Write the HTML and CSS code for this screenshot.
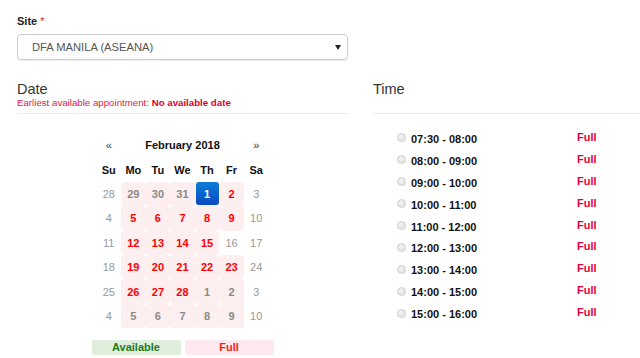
FILE: index.html
```html
<!DOCTYPE html>
<html lang="en">
<head>
    <meta charset="UTF-8">
    <title>Appointment - Site, Date and Time</title>
    <link rel="stylesheet" href="styles.css">
</head>
<body>
    <div class="page">
        <div class="field-label">Site <span class="req">*</span></div>
        <div class="select">
            <span>DFA MANILA (ASEANA)</span>
            <svg class="caret" width="6" height="5" viewBox="0 0 6 5"><path d="M0 0H6L3 5Z" fill="#222"/></svg>
        </div>

        <div class="columns">
            <div class="col col-date">
                <div class="col-head">
                    <h2>Date</h2>
                    <div class="earliest">Earliest available appointment: <b>No available date</b></div>
                </div>

                <table class="calendar">
                    <thead>
                        <tr class="nav">
                            <th>&laquo;</th>
                            <th colspan="5" class="month">February 2018</th>
                            <th>&raquo;</th>
                        </tr>
                        <tr class="dow">
                            <th>Su</th><th>Mo</th><th>Tu</th><th>We</th><th>Th</th><th>Fr</th><th>Sa</th>
                        </tr>
                    </thead>
                    <tbody id="days"></tbody>
                </table>

                <div class="legend">
                    <div class="legend-item available">Available</div>
                    <div class="legend-item full">Full</div>
                </div>
            </div>

            <div class="col col-time">
                <div class="col-head">
                    <h2>Time</h2>
                </div>
                <div class="slots" id="slots"></div>
            </div>
        </div>
    </div>

    <script>
        // kind: o = other month weekend, g = other month weekday (full), f = full, w = weekend, s = selected
        let weeks = [
            [[28,'o'],[29,'g'],[30,'g'],[31,'g'],[1,'s'],[2,'f'],[3,'o']],
            [[4,'w'],[5,'f'],[6,'f'],[7,'f'],[8,'f'],[9,'f'],[10,'w']],
            [[11,'w'],[12,'f'],[13,'f'],[14,'f'],[15,'f'],[16,'w'],[17,'w']],
            [[18,'w'],[19,'f'],[20,'f'],[21,'f'],[22,'f'],[23,'f'],[24,'w']],
            [[25,'w'],[26,'f'],[27,'f'],[28,'f'],[1,'g'],[2,'g'],[3,'o']],
            [[4,'o'],[5,'g'],[6,'g'],[7,'g'],[8,'g'],[9,'g'],[10,'o']]
        ];
        let classes = { o: 'day muted', g: 'day pink old', f: 'day pink full', w: 'day muted', s: 'day selected' };

        let days = document.getElementById('days');
        weeks.forEach(week => {
            let tr = document.createElement('tr');
            week.forEach(([num, kind]) => {
                let td = document.createElement('td');
                td.className = classes[kind];
                if (kind === 's') {
                    let btn = document.createElement('span');
                    btn.className = 'active';
                    btn.textContent = num;
                    td.appendChild(btn);
                } else {
                    td.textContent = num;
                }
                tr.appendChild(td);
            });
            days.appendChild(tr);
        });

        let times = ['07:30 - 08:00', '08:00 - 09:00', '09:00 - 10:00', '10:00 - 11:00', '11:00 - 12:00',
                     '12:00 - 13:00', '13:00 - 14:00', '14:00 - 15:00', '15:00 - 16:00'];
        let slots = document.getElementById('slots');
        times.forEach(t => {
            let row = document.createElement('div');
            row.className = 'slot';
            row.innerHTML = `<label><span class="radio"></span>${t}</label><span class="status">Full</span>`;
            slots.appendChild(row);
        });
    </script>
</body>
</html>
```

FILE: styles.css
```css
body {
    margin: 0;
    background: #fff;
    font-family: "Liberation Sans", Arial, sans-serif;
    color: #333;
    overflow: hidden;
}
.page {
    padding: 15px 0 0 17px;
}
.field-label {
    font-size: 11px;
    line-height: 12px;
    font-weight: bold;
    color: #222;
}
.req {
    color: #e0223c;
    font-weight: normal;
}
.select {
    margin-top: 7px;
    width: 331px;
    height: 26px;
    box-sizing: border-box;
    border: 1px solid #ccc;
    border-radius: 4px;
    box-shadow: 0 1px 1px rgba(0, 0, 0, 0.08);
    display: flex;
    align-items: center;
    justify-content: space-between;
    padding: 0 6px 0 14px;
    font-size: 11.2px;
    color: #555;
}
.caret {
    margin-top: 1px;
}
.columns {
    display: flex;
    gap: 25px;
    margin-top: 21px;
}
.col-date {
    width: 331px;
}
.col-time {
    flex: 1;
}
.col-head {
    height: 32px;
    border-bottom: 1px solid #eee;
}
.col-head h2 {
    margin: 0;
    font-size: 14.5px;
    line-height: 16px;
    font-weight: normal;
    color: #333;
}
.earliest {
    font-size: 9.7px;
    line-height: 12px;
    color: #e4164a;
}
.earliest b {
    color: #e0002e;
}
.calendar {
    margin: 19px auto 0;
    border-collapse: collapse;
    table-layout: fixed;
    width: 172px;
    font-size: 11px;
}
.calendar th,
.calendar td {
    height: 24.4px;
    padding: 0;
    text-align: center;
    vertical-align: middle;
}
.calendar th {
    font-weight: bold;
    color: #111;
}
.nav th:first-child,
.nav th:last-child {
    font-weight: normal;
    color: #333;
}
.day.muted {
    color: #999;
}
.day.pink {
    background: #fdeef0;
    border-radius: 4px;
    font-weight: bold;
}
.day.old {
    color: #8a8a8a;
}
.day.full {
    color: #ff0000;
}
.day.selected {
    background: #fdeef0;
}
.active {
    display: flex;
    align-items: center;
    justify-content: center;
    width: 23px;
    height: 23px;
    margin: 0 auto;
    border-radius: 3px;
    background: linear-gradient(#0c7fd6, #0848c2);
    color: #fff;
    font-weight: bold;
}
.legend {
    display: flex;
    justify-content: center;
    gap: 4px;
    margin-top: 12px;
}
.legend-item {
    width: 89px;
    height: 15px;
    line-height: 15px;
    text-align: center;
    font-size: 11px;
    font-weight: bold;
    border-radius: 2px;
}
.legend-item.available {
    background: #dfefdc;
    color: #1d7a1d;
}
.legend-item.full {
    background: #fde9ee;
    color: #ff1a1a;
}
.slots {
    margin-top: 14px;
    padding-left: 24px;
}
.slot {
    display: grid;
    grid-template-columns: 180px auto;
    align-items: center;
    height: 21.9px;
}
.slot label {
    display: flex;
    align-items: center;
    gap: 5px;
    font-size: 11px;
    font-weight: bold;
    color: #111;
}
.radio {
    width: 9px;
    height: 9px;
    box-sizing: border-box;
    border-radius: 50%;
    border: 1px solid #cfcfcf;
    background: radial-gradient(circle at 40% 35%, #f4f4f4, #dcdcdc);
    margin-bottom: 2px;
}
.status {
    font-size: 11px;
    font-weight: bold;
    color: #e8003c;
    padding-bottom: 4px;
}
```
